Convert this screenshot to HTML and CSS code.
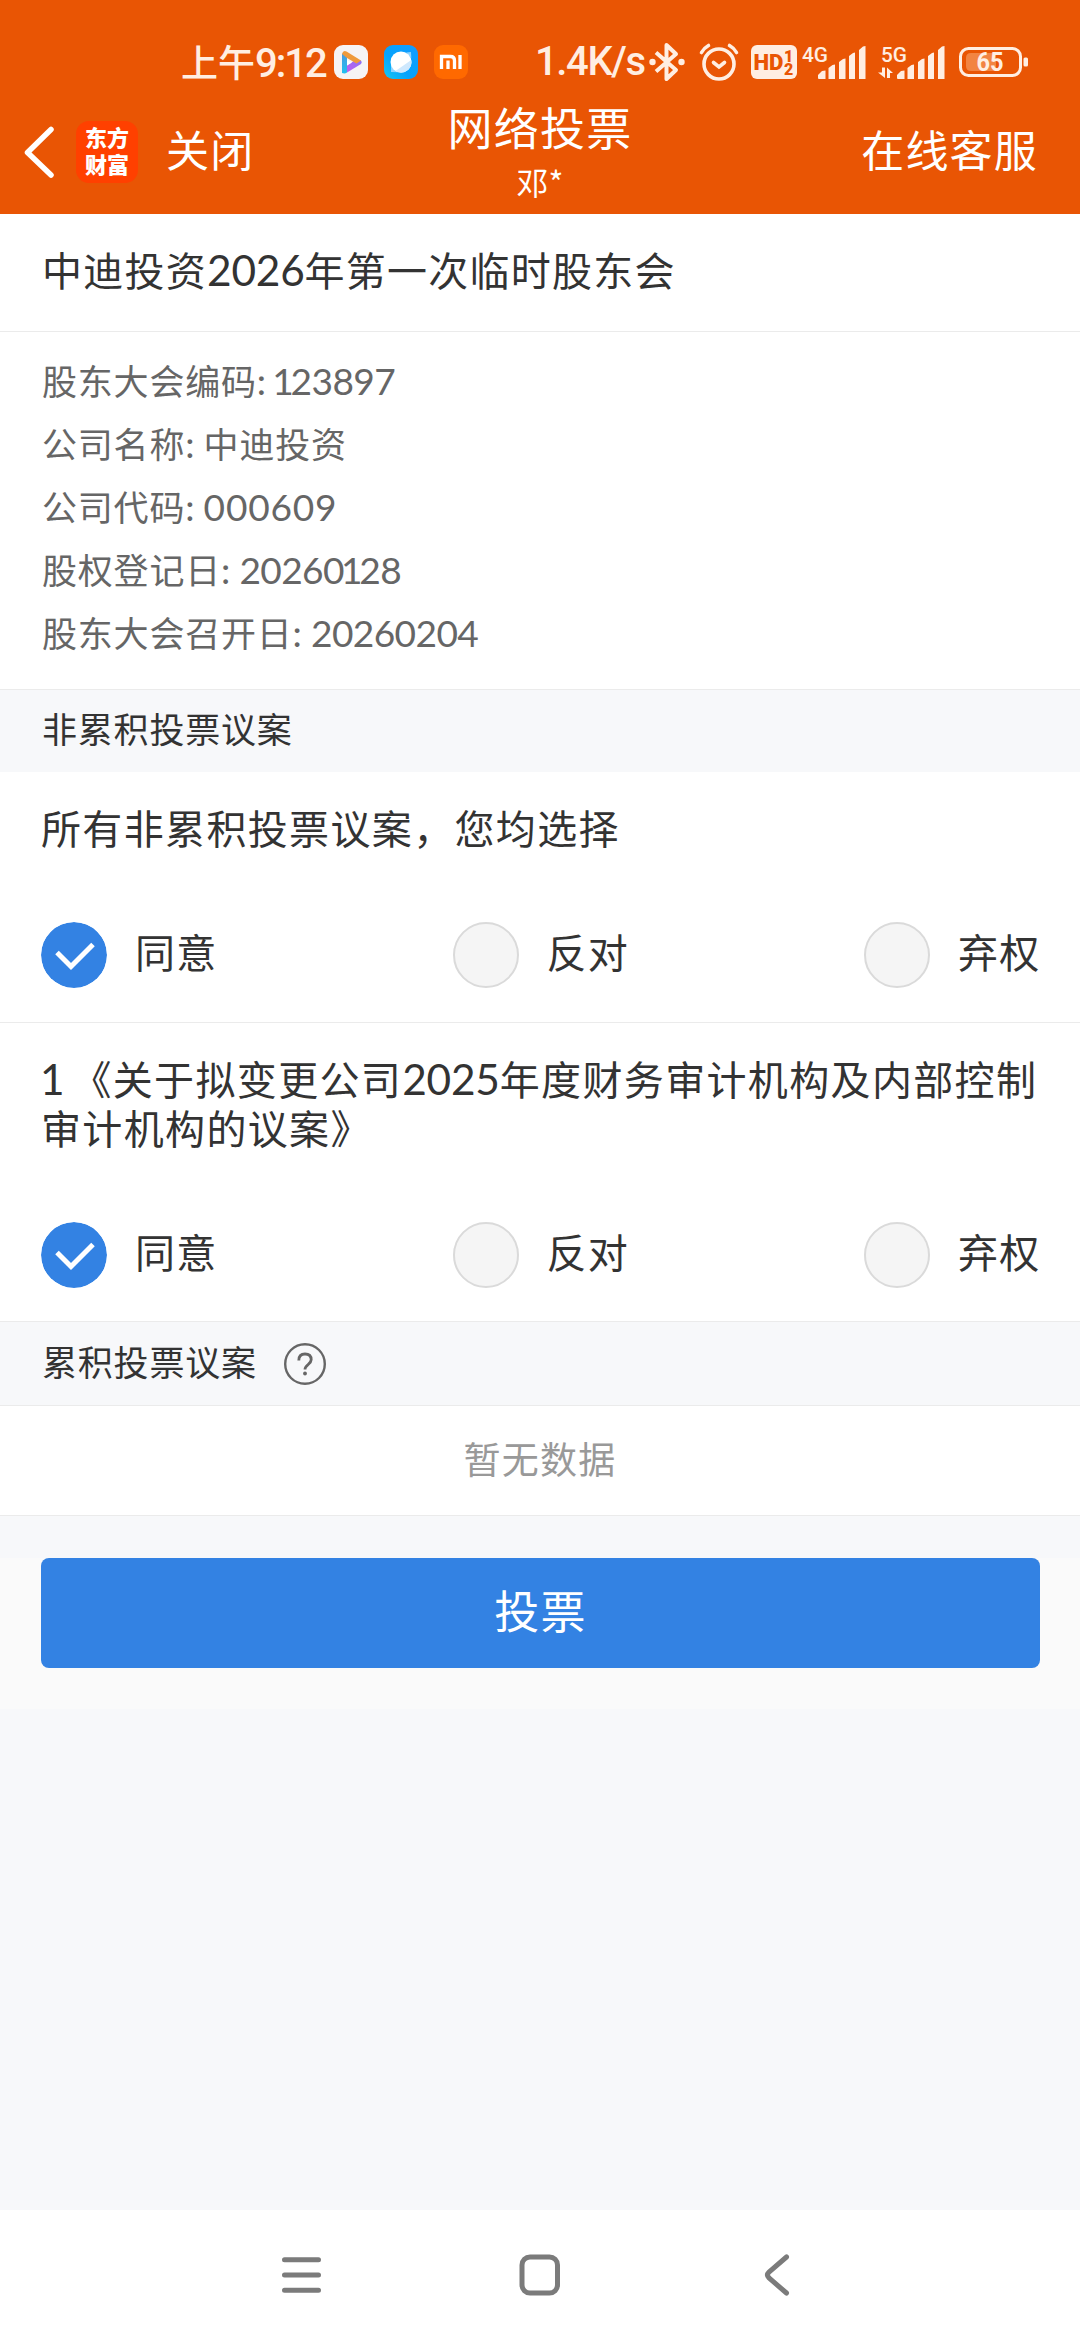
FILE: index.html
```html
<!DOCTYPE html>
<html lang="zh-CN">
<head>
<meta charset="utf-8">
<title>网络投票</title>
<link rel="stylesheet" href="styles.css">
</head>
<body>
<header class="top">
  <div class="status">
    <div class="clock">上午<span class="clock-num">9:12</span></div>
    <svg class="app" width="34" height="34" viewBox="0 0 34 34"><defs><linearGradient id="v1" x1="0" y1="0" x2="0" y2="1"><stop offset="0" stop-color="#4a9ae0"/><stop offset="1" stop-color="#22c0f0"/></linearGradient><linearGradient id="v2" x1="0" y1="1" x2="1" y2="0"><stop offset="0" stop-color="#c45cf0"/><stop offset="1" stop-color="#8a74f4"/></linearGradient></defs><rect width="34" height="34" rx="9" fill="#f6f4f5"/><path d="M8 8.500L13 11v16.500q-2 1.500-5 .5z" fill="url(#v1)"/><path d="M13 27.500L27 19q1.500-2 0-3.500l-5-1-9 6z" fill="url(#v2)"/><path d="M8 9q1-4 4.500-2.500L27 15.500l-4.500 3L13 13z" fill="#ef9a3c"/><path d="M13 15l5 2.500-5 3z" fill="#fff"/></svg>
    <svg class="app" width="34" height="34" viewBox="0 0 34 34"><defs><linearGradient id="b1" x1="1" y1="0" x2="0" y2="1"><stop offset="0" stop-color="#139cff"/><stop offset=".6" stop-color="#06a3fc"/><stop offset="1" stop-color="#14c8f2"/></linearGradient></defs><rect width="34" height="34" rx="9" fill="url(#b1)"/><path d="M22 7.500l5-.5.300 6M7 20v7l7 .3" fill="#8fd4ff"/><circle cx="17" cy="17" r="10.500" fill="#fff"/><path d="M27.300 15A10.500 10.500 0 0 1 11.500 26z" fill="#cfe8fd"/></svg>
    <svg class="app" width="34" height="34" viewBox="0 0 34 34"><rect width="34" height="34" rx="9" fill="#ff6900"/><path d="M7.500 24V11.500h9q4 0 4 4V24M14 15.500V24M26 10v14" fill="none" stroke="#fff" stroke-width="3.300"/></svg>
    <div class="speed">1.4K/s</div>
    <svg class="bt" width="36" height="40" viewBox="0 0 36 40" fill="none" stroke="#ffeee2" stroke-width="4"><path d="M7 10.500L27 28 17.500 37V3L27 12 7 29.500" stroke-linejoin="round"/><circle cx="3.500" cy="20" r="3.200" fill="#ffeee2" stroke="none"/><circle cx="32.500" cy="20" r="3.200" fill="#ffeee2" stroke="none"/></svg>
    <svg class="alarm" width="40" height="38" viewBox="0 0 40 38" fill="none" stroke="#ffeee2" stroke-width="3.600" stroke-linecap="round"><circle cx="20" cy="21" r="15"/><path d="M14.500 19.500l5.500 4.500 5.500-4.500M2.500 9.500Q5 5 9.500 2.500M37.500 9.500Q35 5 30.500 2.500"/></svg>
    <svg class="hd" width="46" height="34" viewBox="0 0 46 34"><rect width="46" height="34" rx="6" fill="#ffeee2"/><g class="t-hd"><text x="2.500" y="25" font-size="22" textLength="30" lengthAdjust="spacingAndGlyphs">HD</text><text x="33" y="16.500" font-size="16">1</text><text x="33" y="30" font-size="16">2</text></g></svg>
    <svg class="sig" width="68" height="36" viewBox="0 0 68 36" fill="#ffeee2"><text class="t-net" x="4" y="18" textLength="26" lengthAdjust="spacingAndGlyphs">4G</text><path d="M20 34.500V31l4-4 3.500-.5v8.500h-6.500zM30.500 35V24l4-3 2.500-.5V35zM41 35V18l4-3 2.500-.5V35zM51 35V12l4-3 2-.5V35zM61 35V6l4-3.500 2.500-.5V35z"/></svg>
    <svg class="sig5" width="68" height="36" viewBox="0 0 68 36" fill="#ffeee2"><text class="t-net" x="4" y="18" textLength="26" lengthAdjust="spacingAndGlyphs">5G</text><path d="M20 34.500V31l4-4 3.500-.5v8.500h-6.500zM30.500 35V24l4-3 2.500-.5V35zM41 35V18l4-3 2.500-.5V35zM51 35V12l4-3 2-.5V35zM61 35V6l4-3.500 2.500-.5V35z"/><path d="M5 23.500h3V34L1 28.500h4zM10 23.500l6 5.500h-3v5h-3z"/></svg>
    <svg class="bat" width="70" height="30" viewBox="0 0 70 30"><rect x="1.500" y="1.500" width="60" height="27" rx="8" fill="none" stroke="#ffeee2" stroke-width="3"/><path d="M12 6h25v18H12q-5 0-5-5v-8q0-5 5-5z" fill="#f28442"/><rect x="64.500" y="10.500" width="4.500" height="9" rx="1.500" fill="#ffeee2"/><text class="t-bat" x="17.500" y="24" textLength="27" lengthAdjust="spacingAndGlyphs">65</text></svg>
  </div>
  <nav class="bar">
    <div class="bar-left">
      <svg width="34" height="54" viewBox="0 0 34 54" fill="none" stroke="#fff" stroke-width="5.500" stroke-linecap="round" stroke-linejoin="round"><path d="M29 4.500L5.500 27.500 29 50"/></svg>
      <div class="logo"><span>东方</span><span>财富</span></div>
      <span class="bar-link">关闭</span>
    </div>
    <div class="bar-title"><h1>网络投票</h1><span class="user">邓*</span></div>
    <span class="bar-link bar-right">在线客服</span>
  </nav>
</header>
<main>
  <h2 class="meeting">中迪投资<span class="num">2026</span>年第一次临时股东会</h2>
  <div class="info">
    <p>股东大会编码<span class="num">: <span class="tight"><span class="one">1</span>23897</span></span></p>
    <p>公司名称<span class="num">: </span>中迪投资</p>
    <p>公司代码<span class="num">: <span class="wide">000609</span></span></p>
    <p>股权登记日<span class="num">: <span class="tight">20260<span class="one">1</span>28</span></span></p>
    <p>股东大会召开日<span class="num">: <span class="tight">20260204</span></span></p>
  </div>
  <div class="section">非累积投票议案</div>
  <section class="motion">
    <p class="motion-title">所有非累积投票议案，您均选择</p>
    <div class="options">
      <div class="option"><svg class="radio" viewBox="0 0 66 66"><circle cx="33" cy="33" r="33" fill="#3382e3"/><path d="M16 30.500L30 44.500 52 22.500" fill="none" stroke="#fff" stroke-width="5"/></svg><span>同意</span></div>
      <div class="option"><span class="radio off"></span><span>反对</span></div>
      <div class="option"><span class="radio off"></span><span>弃权</span></div>
    </div>
  </section>
  <section class="motion second">
    <p class="motion-title"><span class="num index">1</span>《关于拟变更公司<span class="num">2025</span>年度财务审计机构及内部控制<br>审计机构的议案》</p>
    <div class="options">
      <div class="option"><svg class="radio" viewBox="0 0 66 66"><circle cx="33" cy="33" r="33" fill="#3382e3"/><path d="M16 30.500L30 44.500 52 22.500" fill="none" stroke="#fff" stroke-width="5"/></svg><span>同意</span></div>
      <div class="option"><span class="radio off"></span><span>反对</span></div>
      <div class="option"><span class="radio off"></span><span>弃权</span></div>
    </div>
  </section>
  <div class="section cumulative"><span>累积投票议案</span>
    <svg width="42" height="42" viewBox="0 0 42 42" fill="none" stroke="#666" stroke-width="2.400"><circle cx="21" cy="21" r="19.800"/><path d="M14.800 17.500q0-6.500 6.200-6.500t6.200 5.800c0 4.200-6.200 5.200-6.200 9.700" stroke-width="2.800"/><circle cx="21" cy="30.500" r="1.900" fill="#666" stroke="none"/></svg>
  </div>
  <div class="empty">暂无数据</div>
  <div class="submit"><button class="vote">投票</button></div>
</main>
<footer class="keys">
  <svg width="42" height="46" viewBox="0 0 42 46" stroke="#7b7b7b" stroke-width="5" stroke-linecap="round"><path d="M4.500 7.700h34M4.500 23h34M4.500 38.300h34"/></svg>
  <svg width="46" height="46" viewBox="0 0 46 46" fill="none" stroke="#7b7b7b" stroke-width="5"><rect x="3" y="5" width="35.500" height="36" rx="8"/></svg>
  <svg width="30" height="46" viewBox="0 0 30 46" fill="none" stroke="#7b7b7b" stroke-width="5" stroke-linecap="round"><path d="M25.500 5L8 20Q5 23 8 26L25.500 41"/></svg>
</footer>
</body>
</html>
```
FILE: styles.css
```css
* { box-sizing: border-box; margin: 0; padding: 0; }
body {
  width: 1080px;
  height: 2340px;
  display: flex;
  flex-direction: column;
  overflow: hidden;
  background: #f7f8fa;
  color: #333;
  font-family: "Noto Sans CJK SC", sans-serif;
  font-weight: 400;
}
svg { display: block; flex: none; }
.num { font-family: Lato, "Noto Sans CJK SC", sans-serif; font-size: 1.06em; line-height: 1px; letter-spacing: -.2px; }
.tight { letter-spacing: -.6px; }
.wide { letter-spacing: .8px; }
.one { margin: 0 -2.500px 0 -3px; }

.top { height: 214px; background: #e95504; color: #fff; flex: none; }
.status {
  height: 100px;
  padding: 24px 0 0 181px;
  display: flex;
  align-items: center;
  color: #ffeee2;
}
.clock { width: 153px; font-size: 37px; font-weight: 500; line-height: 40px; white-space: nowrap; }
.clock-num, .speed { font-family: Roboto, sans-serif; font-weight: 500; }
.clock-num { font-size: 40px; letter-spacing: -2px; }
.app { margin-right: 16px; }
.speed { margin-left: 51px; width: 114px; font-size: 40px; line-height: 40px; letter-spacing: -1.4px; white-space: nowrap; }
.alarm { margin-left: 14px; }
.hd { margin-left: 12px; }
.sig { margin-left: 1px; }
.sig5 { margin-left: 11px; }
.bat { margin-left: 14px; }
.t-hd { font-family: Roboto, sans-serif; font-weight: 900; fill: #e95504; }
.t-net { font-family: Roboto, sans-serif; font-weight: 500; font-size: 21px; }
.t-bat { font-family: Roboto, sans-serif; font-weight: 700; font-size: 25px; fill: #ffeee2; }

.bar {
  height: 114px;
  padding: 0 44px 0 44px;
  display: grid;
  grid-template-columns: 1fr 200px 1fr;
}
.bar-left { display: flex; align-items: center; height: 104px; margin-left: -22px; }
.logo {
  width: 62px;
  height: 62px;
  margin: 0 28px 0 20px;
  padding: 2px 0;
  border-radius: 13px;
  background: #ff4000;
  display: flex;
  flex-direction: column;
  align-items: center;
  font-size: 22px;
  font-weight: 900;
  line-height: 27px;
}
.bar-link { font-size: 43px; line-height: 97px; height: 104px; letter-spacing: 1.2px; }
.bar-right { justify-self: end; margin-right: -2px; }
.bar-title { display: flex; flex-direction: column; align-items: center; }
.bar-title h1 { font-size: 45px; font-weight: 400; line-height: 54px; letter-spacing: 1.3px; white-space: nowrap; }
.user { font-size: 32px; line-height: 55px; }

.meeting {
  height: 118px;
  padding-left: 42px;
  background: #fff;
  border-bottom: 1px solid #ebebeb;
  font-size: 40px;
  font-weight: 400;
  line-height: 111px;
  letter-spacing: 1.25px;
}
.info {
  height: 358px;
  padding: 16px 42px 0;
  background: #fff;
  border-bottom: 1px solid #ebebeb;
  color: #666;
  font-size: 35px;
  letter-spacing: .8px;
}
.info p { line-height: 63px; height: 63px; white-space: pre; }
.section {
  height: 82px;
  padding-left: 42px;
  font-size: 35px;
  line-height: 76px;
  letter-spacing: .8px;
}
.motion {
  height: 251px;
  padding: 31px 40px 0 41px;
  background: #fff;
  border-bottom: 1px solid #ebebeb;
  font-size: 40px;
  letter-spacing: 1.35px;
}
.motion-title { line-height: 49px; height: 49px; white-space: nowrap; }
.second { height: 299px; }
.second .motion-title { height: 98px; }
.index { margin: 0 7px 0 -1px; }
.options { margin-top: 70px; display: flex; justify-content: space-between; height: 66px; }
.option { display: flex; width: 176px; line-height: 59px; white-space: nowrap; }
.radio { width: 66px; height: 66px; margin-right: 28px; border-radius: 50%; flex: none; }
.off { background: #f5f5f5; border: 2px solid #dadada; }
.cumulative {
  height: 84px;
  display: flex;
  gap: 27px;
  align-items: center;
  border-bottom: 1px solid #ebebeb;
}
.cumulative span { height: 82px; }
.empty {
  height: 110px;
  background: #fff;
  border-bottom: 1px solid #ebebeb;
  color: #999;
  font-size: 37px;
  line-height: 105px;
  letter-spacing: 1.2px;
  text-align: center;
}
.submit { margin-top: 42px; height: 151px; background: #fafafa; padding: 0 40px 0 41px; }
.vote {
  display: block;
  width: 100%;
  height: 110px;
  padding-bottom: 7px;
  border: 0;
  border-radius: 8px;
  background: #3382e3;
  color: #fff;
  font: 400 45px/103px "Noto Sans CJK SC", sans-serif;
  letter-spacing: 1.2px;
}
.keys {
  margin-top: auto;
  height: 130px;
  background: #fff;
  padding: 0 289px 0 280px;
  display: flex;
  justify-content: space-between;
  align-items: center;
}
```
